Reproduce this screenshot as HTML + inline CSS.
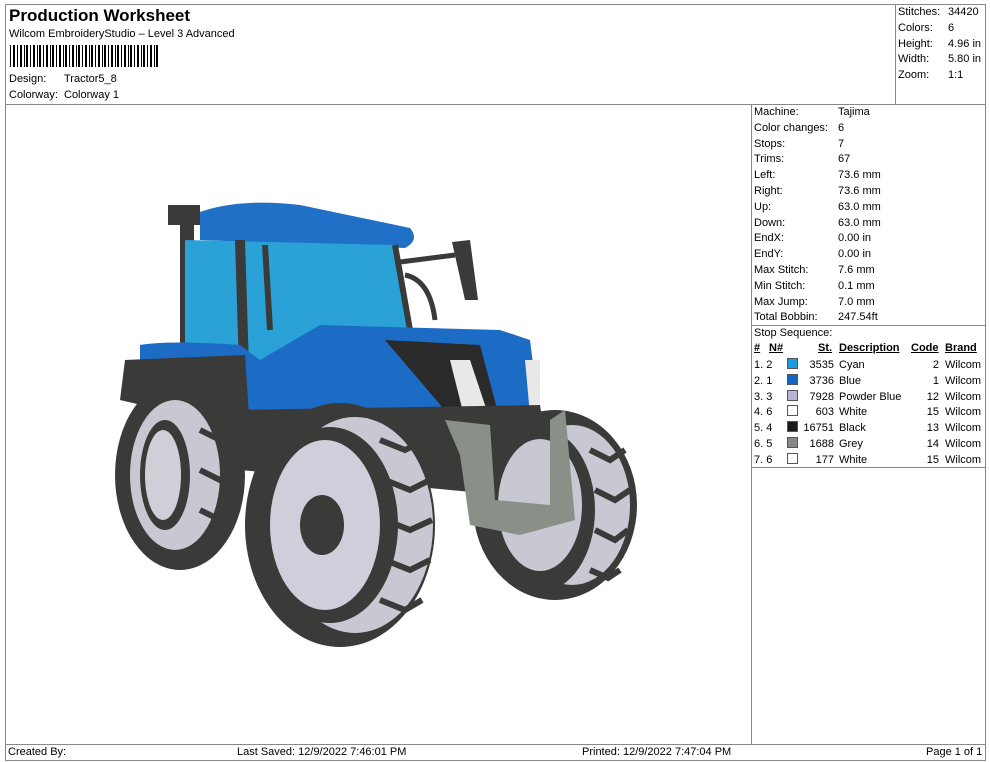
<!DOCTYPE html>
<html><head><meta charset="utf-8"><style>
body{margin:0;width:990px;height:762px;background:#fff;font-family:"Liberation Sans",sans-serif;font-size:11px;color:#000;position:relative;overflow:hidden}
.a{position:absolute;white-space:nowrap}
.ln{position:absolute;background:#888}
.sw{display:inline-block;width:9px;height:9px;border:1px solid #555;vertical-align:-1px}
</style></head><body>
<div class="ln" style="left:5px;top:4px;width:981px;height:1px"></div>
<div class="ln" style="left:5px;top:4px;width:1px;height:757px"></div>
<div class="ln" style="left:985px;top:4px;width:1px;height:757px"></div>
<div class="ln" style="left:5px;top:760px;width:981px;height:1px"></div>
<div class="ln" style="left:5px;top:104px;width:981px;height:1px"></div>
<div class="ln" style="left:895px;top:4px;width:1px;height:100px"></div>
<div class="ln" style="left:751px;top:104px;width:1px;height:640px"></div>
<div class="ln" style="left:751px;top:325px;width:235px;height:1px"></div>
<div class="ln" style="left:751px;top:467px;width:235px;height:1px"></div>
<div class="ln" style="left:5px;top:744px;width:981px;height:1px"></div>

<div class="a" style="left:9px;top:6px;font-size:17px;font-weight:bold">Production Worksheet</div>
<div class="a" style="left:9px;top:28px">Wilcom EmbroideryStudio – Level 3 Advanced</div>
<svg class="a" style="left:10px;top:45px" width="148" height="22">
<g fill="#000">
<rect x="0" width="1" height="22"/><rect x="3" width="2" height="22"/><rect x="7" width="1" height="22"/><rect x="10" width="2" height="22"/><rect x="14" width="1" height="22"/><rect x="16" width="2" height="22"/><rect x="20" width="1" height="22"/><rect x="23" width="2" height="22"/><rect x="27" width="1" height="22"/><rect x="29" width="2" height="22"/><rect x="33" width="1" height="22"/><rect x="36" width="2" height="22"/><rect x="40" width="1" height="22"/><rect x="42" width="2" height="22"/><rect x="46" width="1" height="22"/><rect x="49" width="2" height="22"/><rect x="53" width="1" height="22"/><rect x="55" width="2" height="22"/><rect x="59" width="1" height="22"/><rect x="62" width="2" height="22"/><rect x="66" width="1" height="22"/><rect x="68" width="2" height="22"/><rect x="72" width="1" height="22"/><rect x="75" width="2" height="22"/><rect x="79" width="1" height="22"/><rect x="81" width="2" height="22"/><rect x="85" width="1" height="22"/><rect x="88" width="2" height="22"/><rect x="92" width="1" height="22"/><rect x="94" width="2" height="22"/><rect x="98" width="1" height="22"/><rect x="101" width="2" height="22"/><rect x="105" width="1" height="22"/><rect x="107" width="2" height="22"/><rect x="111" width="1" height="22"/><rect x="114" width="2" height="22"/><rect x="118" width="1" height="22"/><rect x="120" width="2" height="22"/><rect x="124" width="1" height="22"/><rect x="127" width="2" height="22"/><rect x="131" width="1" height="22"/><rect x="133" width="2" height="22"/><rect x="137" width="1" height="22"/><rect x="140" width="2" height="22"/><rect x="144" width="1" height="22"/><rect x="146" width="2" height="22"/>
</g></svg>
<div class="a" style="left:9px;top:73px">Design:</div><div class="a" style="left:64px;top:73px">Tractor5_8</div>
<div class="a" style="left:9px;top:89px">Colorway:</div><div class="a" style="left:64px;top:89px">Colorway 1</div>

<div class="a" style="left:898px;top:5px;line-height:15.8px">Stitches:<br>Colors:<br>Height:<br>Width:<br>Zoom:</div>
<div class="a" style="left:948px;top:5px;line-height:15.8px">34420<br>6<br>4.96 in<br>5.80 in<br>1:1</div>

<div class="a" style="left:754px;top:105px;line-height:15.8px">Machine:<br>Color changes:<br>Stops:<br>Trims:<br>Left:<br>Right:<br>Up:<br>Down:<br>EndX:<br>EndY:<br>Max Stitch:<br>Min Stitch:<br>Max Jump:<br>Total Bobbin:<br>Stop Sequence:</div>
<div class="a" style="left:838px;top:105px;line-height:15.8px">Tajima<br>6<br>7<br>67<br>73.6 mm<br>73.6 mm<br>63.0 mm<br>63.0 mm<br>0.00 in<br>0.00 in<br>7.6 mm<br>0.1 mm<br>7.0 mm<br>247.54ft</div>

<div class="a" style="left:754px;top:342px;font-weight:bold;text-decoration:underline">#</div>
<div class="a" style="left:769px;top:342px;font-weight:bold;text-decoration:underline">N#</div>
<div class="a" style="left:818px;top:342px;font-weight:bold;text-decoration:underline">St.</div>
<div class="a" style="left:839px;top:342px;font-weight:bold;text-decoration:underline">Description</div>
<div class="a" style="left:911px;top:342px;font-weight:bold;text-decoration:underline">Code</div>
<div class="a" style="left:945px;top:342px;font-weight:bold;text-decoration:underline">Brand</div>
<div class="a" style="left:754px;top:358px;line-height:15.75px">1. 2<br>2. 1<br>3. 3<br>4. 6<br>5. 4<br>6. 5<br>7. 6</div>
<div class="a" style="left:787px;top:358px;line-height:15.75px">
<span class="sw" style="background:#1d9be0"></span><br><span class="sw" style="background:#1565c8"></span><br><span class="sw" style="background:#b8b4d8"></span><br><span class="sw" style="background:#fff"></span><br><span class="sw" style="background:#1a1a1a"></span><br><span class="sw" style="background:#888"></span><br><span class="sw" style="background:#fff"></span></div>
<div class="a" style="left:796px;top:358px;width:38px;text-align:right;line-height:15.75px">3535<br>3736<br>7928<br>603<br>16751<br>1688<br>177</div>
<div class="a" style="left:839px;top:358px;line-height:15.75px">Cyan<br>Blue<br>Powder Blue<br>White<br>Black<br>Grey<br>White</div>
<div class="a" style="left:900px;top:358px;width:39px;text-align:right;line-height:15.75px">2<br>1<br>12<br>15<br>13<br>14<br>15</div>
<div class="a" style="left:945px;top:358px;line-height:15.75px">Wilcom<br>Wilcom<br>Wilcom<br>Wilcom<br>Wilcom<br>Wilcom<br>Wilcom</div>

<div class="a" style="left:8px;top:746px">Created By:</div>
<div class="a" style="left:237px;top:746px">Last Saved: 12/9/2022 7:46:01 PM</div>
<div class="a" style="left:582px;top:746px">Printed: 12/9/2022 7:47:04 PM</div>
<div class="a" style="left:926px;top:746px">Page 1 of 1</div>

<svg class="a" style="left:0;top:0" width="750" height="740">
<rect x="168" y="205" width="32" height="20" fill="#3a3a38"/>
<rect x="180" y="220" width="14" height="130" fill="#3a3a38"/>
<path d="M200 212 Q240 198 300 205 L410 228 Q420 240 405 248 L200 240Z" fill="#2070c8"/>
<path d="M185 240 L395 245 L410 330 L185 400Z" fill="#2aa2d8"/>
<path d="M240 240 L245 400" stroke="#3a3a38" stroke-width="10"/>
<path d="M265 245 L270 330 M395 245 L410 330" stroke="#3a3a38" stroke-width="6" fill="none"/>
<path d="M400 262 L455 255 M405 275 Q430 280 435 320" stroke="#3a3a38" stroke-width="5" fill="none"/>
<path d="M452 242 L470 240 L478 300 L465 300Z" fill="#3a3a38"/>
<path d="M140 345 Q170 340 240 345 L260 360 L320 325 L500 330 L530 340 L540 420 L460 430 L250 430 L140 400Z" fill="#1c6cc6"/>
<path d="M385 340 L480 345 L500 420 L460 428Z" fill="#2a2a2a"/>
<path d="M450 360 L470 360 L490 420 L465 420Z" fill="#e8e8e8"/>
<path d="M525 360 L540 360 L540 415 L530 415Z" fill="#e8e8e8"/>
<path d="M125 360 L245 355 L250 430 L120 400Z" fill="#3a3a38"/>
<path d="M230 410 L540 405 L555 500 L240 470Z" fill="#3a3a38"/>
<!-- rear wheel left -->
<ellipse cx="180" cy="475" rx="65" ry="95" fill="#3a3a38"/>
<ellipse cx="175" cy="475" rx="45" ry="75" fill="#c8c8d2"/>
<ellipse cx="165" cy="475" rx="25" ry="55" fill="#3a3a38"/>
<ellipse cx="163" cy="475" rx="18" ry="45" fill="#cfcfd8"/>
<!-- right front wheel -->
<ellipse cx="555" cy="505" rx="82" ry="95" fill="#3a3a38"/>
<ellipse cx="572" cy="505" rx="58" ry="80" fill="#c8c8d2"/>
<ellipse cx="540" cy="510" rx="55" ry="82" fill="#3a3a38"/>
<ellipse cx="540" cy="505" rx="42" ry="66" fill="#c8c8d2"/>
<!-- grey bumper -->
<path d="M445 420 L490 425 L495 500 L550 505 L550 420 L565 410 L575 520 L520 535 L470 525 L460 455Z" fill="#8a8f88"/>
<!-- big front left wheel -->
<ellipse cx="340" cy="525" rx="95" ry="122" fill="#3a3a38"/>
<ellipse cx="355" cy="525" rx="78" ry="108" fill="#c8c8d2"/>
<ellipse cx="330" cy="525" rx="68" ry="98" fill="#3a3a38"/>
<ellipse cx="325" cy="525" rx="55" ry="85" fill="#cfcfdb"/>
<ellipse cx="322" cy="525" rx="22" ry="30" fill="#3a3a38"/>
<g stroke="#3a3a38" stroke-width="6" fill="none">
<path d="M380 440 L405 450 L425 440"/><path d="M385 480 L410 490 L430 480"/><path d="M385 520 L410 530 L432 520"/><path d="M385 560 L410 570 L430 560"/><path d="M380 600 L405 610 L422 600"/>
<path d="M590 450 L610 460 L625 450"/><path d="M595 490 L615 500 L630 490"/><path d="M595 530 L615 540 L628 530"/><path d="M590 570 L608 578 L620 570"/>
<path d="M200 430 L220 440 L232 430"/><path d="M200 470 L220 480 L235 470"/><path d="M200 510 L220 520 L232 510"/>
</g>
</svg>
</body></html>
